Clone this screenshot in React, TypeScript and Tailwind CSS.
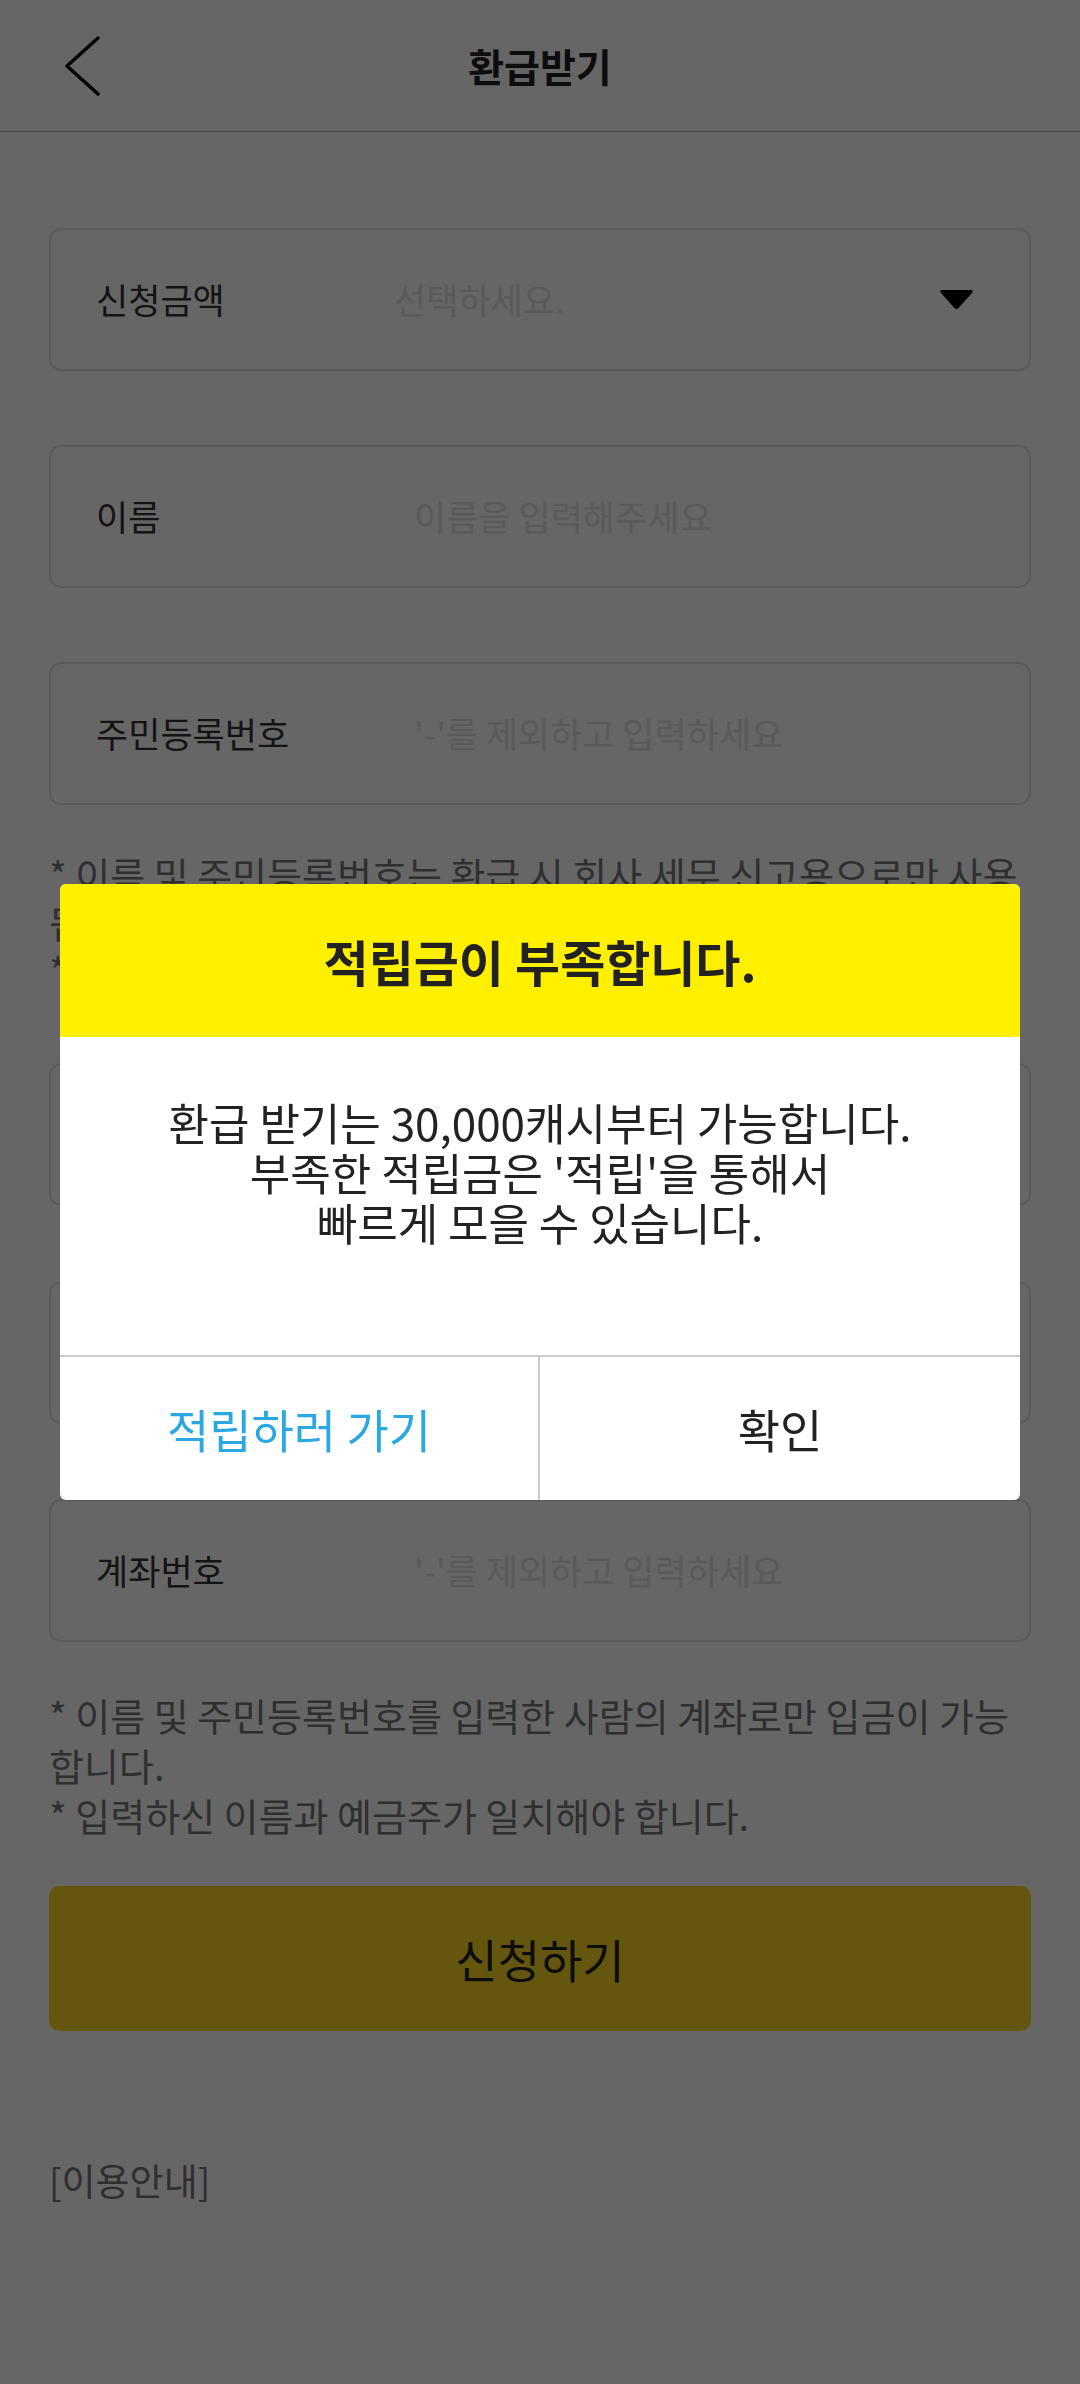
import { ChangeEvent, useState } from 'react'

type Field = { label: string; placeholder: string; select?: boolean }

const topFields: Field[] = [
  { label: '신청금액', placeholder: '선택하세요.', select: true },
  { label: '이름', placeholder: '이름을 입력해주세요' },
  { label: '주민등록번호', placeholder: "'-'를 제외하고 입력하세요" },
]

const bankFields: Field[] = [
  { label: '은행명', placeholder: '선택하세요.', select: true },
  { label: '예금주', placeholder: '예금주를 입력해주세요' },
  { label: '계좌번호', placeholder: "'-'를 제외하고 입력하세요" },
]

function Caret() {
  return (
    <svg width="37" height="21" viewBox="0 0 37 21" className="shrink-0">
      <path d="M4 1 H33 Q36 1 34 4 L20.5 19 Q18.5 21 16.5 19 L3 4 Q1 1 4 1 Z" fill="#000" />
    </svg>
  )
}

function FormField({ label, placeholder, select }: Field) {
  const [value, setValue] = useState('')
  return (
    <div className="h-[143px] rounded-[12px] border-2 border-[#e2e2e2] flex items-center pl-[45px] pr-[54px]">
      <span className="w-[298px] shrink-0 text-[35px] text-[#333]">{label}</span>
      {select ? (
        <>
          <span className="flex-1 text-[35px] text-[#e0e0e0]">{placeholder}</span>
          <Caret />
        </>
      ) : (
        <input
          value={value}
          onChange={(e: ChangeEvent<HTMLInputElement>) => setValue(e.target.value)}
          placeholder={placeholder}
          className="flex-1 min-w-0 pl-[20px] text-[35px] text-[#333] bg-transparent outline-none placeholder:text-[#e0e0e0]"
        />
      )}
    </div>
  )
}

export default function App() {
  return (
    <div className="relative min-h-[2384px] w-full bg-white font-['Noto_Sans_CJK_KR',sans-serif]">
      <header className="h-[132px] border-b border-[#b4b4b4] flex items-center">
        <div className="w-[131px] h-full flex items-center pl-[64px]">
          <svg width="38" height="62" viewBox="0 0 38 62">
            <path d="M34 3 L3 31 L34 59" fill="none" stroke="#000" strokeWidth="3.5" strokeLinecap="round" strokeLinejoin="round" />
          </svg>
        </div>
        <h1 className="flex-1 text-center text-[39px] font-bold text-[#222]">환급받기</h1>
        <div className="w-[131px]" />
      </header>

      <main className="px-[49px] pt-[96px] pb-[160px]">
        <div className="flex flex-col gap-[74px]">
          {topFields.map((f) => (
            <FormField key={f.label} {...f} />
          ))}
        </div>

        <div className="mt-[45px] text-[38px] leading-[48px] text-[#777] break-all">
          <p>* 이름 및 주민등록번호는 환급 시 회사 세무 신고용으로만 사용됩니다.</p>
          <p>* 환급 신청 후 영업일 기준 3~5일 이내에 입금됩니다.</p>
        </div>

        <div className="mt-[69px] flex flex-col gap-[75px]">
          {bankFields.map((f) => (
            <FormField key={f.label} {...f} />
          ))}
        </div>

        <div className="mt-[48px] text-[38px] leading-[50px] text-[#777] break-all">
          <p>* 이름 및 주민등록번호를 입력한 사람의 계좌로만 입금이 가능합니다.</p>
          <p>* 입력하신 이름과 예금주가 일치해야 합니다.</p>
        </div>

        <button className="mt-[46px] w-full h-[145px] rounded-[10px] bg-[#fbd823] text-[46px] text-[#222]">
          신청하기
        </button>

        <p className="mt-[124px] text-[37px] leading-[50px] text-[#777]">[이용안내]</p>
      </main>

      <div className="fixed inset-0 bg-black/60 flex items-center justify-center">
        <div className="w-[960px] rounded-[6px] overflow-hidden bg-white">
          <div className="h-[153px] bg-[#fff000] flex items-center justify-center">
            <h2 className="text-[49px] font-bold text-[#222]">적립금이 부족합니다.</h2>
          </div>
          <div className="pt-[60px] pb-[108px] text-center text-[44px] leading-[50px] text-[#222]">
            <p>환급 받기는 30,000캐시부터 가능합니다.</p>
            <p>부족한 적립금은 '적립'을 통해서</p>
            <p>빠르게 모을 수 있습니다.</p>
          </div>
          <div className="grid grid-cols-2 border-t-2 border-[#cccccc] h-[145px]">
            <button className="border-r-2 border-[#cccccc] text-[46px] text-[#29a8e3]">적립하러 가기</button>
            <button className="text-[46px] text-[#222]">확인</button>
          </div>
        </div>
      </div>
    </div>
  )
}
